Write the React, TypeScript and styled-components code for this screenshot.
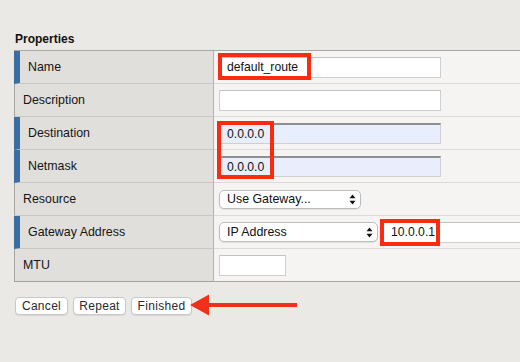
import React from "react";
import styled, { createGlobalStyle } from "styled-components";

const Global = createGlobalStyle`
  html, body {
    margin: 0;
    padding: 0;
    background: #ebe9e6;
    overflow: hidden;
  }
  body {
    font-family: "Liberation Sans", Arial, Helvetica, sans-serif;
    font-size: 12px;
    color: #151515;
  }
`;

const Page = styled.div`
  width: 520px;
  height: 362px;
  box-sizing: border-box;
  padding: 31px 0 0 14px;
`;

const Title = styled.div`
  font-weight: bold;
  line-height: 16px;
  margin: 0 0 3px 1px;
  color: #111;
`;

const Table = styled.div`
  border-top: 1px solid #aaa8a5;
`;

const Row = styled.div`
  display: grid;
  grid-template-columns: 200px 1fr;
  height: 33px;
`;

const Label = styled.div<{ $req?: boolean; $last?: boolean }>`
  display: flex;
  align-items: center;
  box-sizing: border-box;
  background: #e1dfdc;
  border-left: ${(p) => (p.$req ? "6px solid #3a6da2" : "1px solid #a6a4a1")};
  border-right: 1px solid #b3b1ae;
  border-bottom: 1px solid ${(p) => (p.$last ? "#a3a19e" : "#c9c7c4")};
  padding-left: 8px;
  white-space: nowrap;
  font-size: 12.4px;
`;

const Value = styled.div<{ $last?: boolean }>`
  display: flex;
  align-items: center;
  gap: 5px;
  box-sizing: border-box;
  background: #f5f4f2;
  border-bottom: 1px solid ${(p) => (p.$last ? "#a8a6a3" : "#dcdad7")};
  padding-left: 5px;
  overflow: visible;
`;

const TextBox = styled.div<{ $w: number; $fill?: boolean }>`
  position: relative;
  flex-shrink: 0;
  width: ${(p) => p.$w}px;
  height: 21px;
  box-sizing: border-box;
  background: ${(p) => (p.$fill ? "#e8eefb" : "#fff")};
  border: 1px solid #cfcfcf;
  border-top: ${(p) => (p.$fill ? "2px solid #8f8f8f" : "1px solid #c2c2c2")};
  padding-left: 7px;
  display: flex;
  align-items: center;
  white-space: nowrap;
  color: #111;
  font-size: 12.2px;
`;

const Highlight = styled.div<{ $l: number; $t: number; $w: number; $h: number }>`
  position: absolute;
  z-index: 2;
  left: ${(p) => p.$l}px;
  top: ${(p) => p.$t}px;
  width: ${(p) => p.$w}px;
  height: ${(p) => p.$h}px;
  box-sizing: border-box;
  border: 4px solid #fb2b12;
  pointer-events: none;
`;

const SelectBox = styled.div<{ $w: number; $h: number }>`
  flex-shrink: 0;
  width: ${(p) => p.$w}px;
  height: ${(p) => p.$h}px;
  box-sizing: border-box;
  background: #fff;
  border: 1px solid #bcbcbc;
  border-radius: 5px;
  box-shadow: 0 1px 1px rgba(0, 0, 0, 0.08);
  display: flex;
  align-items: center;
  justify-content: space-between;
  padding: 0 4px 0 7px;
  color: #111;
  white-space: nowrap;
  font-size: 12.4px;
`;

const Buttons = styled.div`
  position: relative;
  display: flex;
  gap: 5px;
  margin: 15px 0 0 1px;
`;

const Btn = styled.button<{ $w: number }>`
  width: ${(p) => p.$w}px;
  height: 18px;
  padding: 0;
  font-family: "Liberation Sans", Arial, Helvetica, sans-serif;
  font-size: 12px;
  color: #2a2a2a;
  background: #fff;
  border: 1px solid #c8c8c8;
  border-radius: 4px;
  box-shadow: 0 1px 1px rgba(0, 0, 0, 0.08);
  letter-spacing: 0.3px;
`;

const Arrow = styled.svg`
  position: absolute;
  left: 175px;
  top: -3px;
`;

const Updown = () => (
  <svg width="7" height="11" viewBox="0 0 7 11">
    <polygon points="0.5,4.2 3.5,0.5 6.5,4.2" fill="#111" />
    <polygon points="0.5,6.8 3.5,10.5 6.5,6.8" fill="#111" />
  </svg>
);

export default function App() {
  return (
    <Page>
      <Global />
      <Title>Properties</Title>
      <Table>
        <Row>
          <Label $req>Name</Label>
          <Value>
            <TextBox $w={222}>
              default_route
              <Highlight $l={-2} $t={-5} $w={93} $h={27} />
            </TextBox>
          </Value>
        </Row>
        <Row>
          <Label>Description</Label>
          <Value>
            <TextBox $w={222} />
          </Value>
        </Row>
        <Row>
          <Label $req>Destination</Label>
          <Value>
            <TextBox $w={222} $fill>
              0.0.0.0
              <Highlight $l={-3} $t={-4} $w={57} $h={58} />
            </TextBox>
          </Value>
        </Row>
        <Row>
          <Label $req>Netmask</Label>
          <Value>
            <TextBox $w={222} $fill>
              0.0.0.0
            </TextBox>
          </Value>
        </Row>
        <Row>
          <Label>Resource</Label>
          <Value>
            <SelectBox $w={142} $h={19}>
              Use Gateway...
              <Updown />
            </SelectBox>
          </Value>
        </Row>
        <Row>
          <Label $req>Gateway Address</Label>
          <Value>
            <SelectBox $w={159} $h={20}>
              IP Address
              <Updown />
            </SelectBox>
            <TextBox $w={160}>
              10.0.0.1
              <Highlight $l={-4} $t={-4} $w={60} $h={27} />
            </TextBox>
          </Value>
        </Row>
        <Row>
          <Label $last>MTU</Label>
          <Value $last>
            <TextBox $w={67} />
          </Value>
        </Row>
      </Table>
      <Buttons>
        <Btn $w={53}>Cancel</Btn>
        <Btn $w={53}>Repeat</Btn>
        <Btn $w={61}>Finished</Btn>
        <Arrow width="110" height="24" viewBox="0 0 110 24">
          <polygon points="0,11 19,0.5 19,21.5" fill="#f0301a" />
          <rect x="18" y="9" width="89" height="4" fill="#f0301a" />
        </Arrow>
      </Buttons>
    </Page>
  );
}
